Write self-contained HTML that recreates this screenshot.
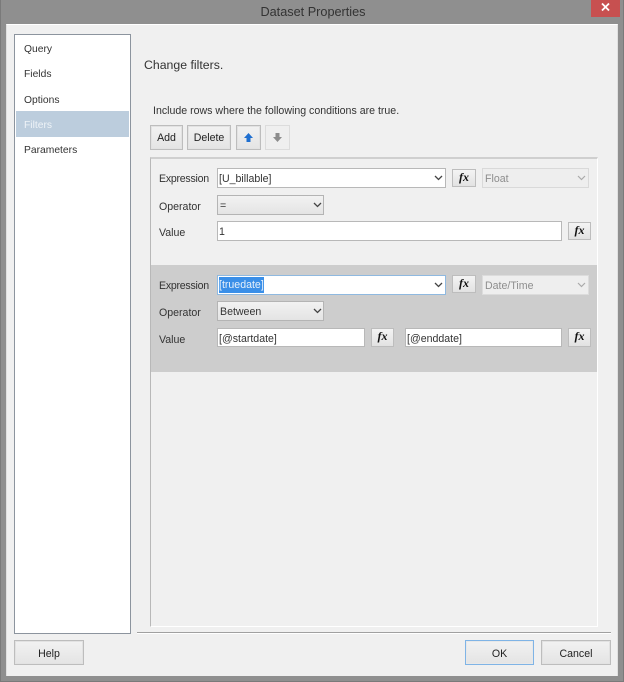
<!DOCTYPE html>
<html><head><meta charset="utf-8"><style>
*{box-sizing:border-box}
html,body{margin:0;padding:0}
body{width:624px;height:682px;background:#8f8f8f;position:relative;overflow:hidden;font-family:"Liberation Sans",sans-serif;font-size:10.6px;color:#222}
.a{position:absolute}
.t{position:absolute;white-space:nowrap;line-height:14px}
.btn{position:absolute;background:linear-gradient(#f2f2f2,#e4e4e4);border:1px solid #bdbdbd;box-shadow:inset 0 0 0 1px #e2e2e2;text-align:center;color:#222}
.inp{position:absolute;background:#fff;border:1px solid #b8b8b8;line-height:20px;padding-left:1px;white-space:nowrap;color:#333}
.sel{position:absolute;background:linear-gradient(#f2f2f2,#e4e4e4);border:1px solid #b4b4b4;line-height:20px;padding-left:2px;color:#333}
.fx{position:absolute;background:linear-gradient(#f4f4f4,#e2e2e2);border:1px solid #bdbdbd;text-align:center;font:italic bold 12px/15px "Liberation Serif",serif;color:#111}
.ch{position:absolute;width:9px;height:6px}
</style></head><body>
<div class="a" style="left:0;top:0;width:1px;height:682px;background:#7a7a7a"></div>
<div class="a" style="left:623px;top:0;width:1px;height:682px;background:#7a7a7a"></div>
<div class="a" style="left:0;top:681px;width:624px;height:1px;background:#7a7a7a"></div>
<div class="t" style="left:1px;top:4px;width:624px;text-align:center;font-size:12.7px;line-height:17px;color:#333">Dataset Properties</div>
<div class="a" style="left:591px;top:0;width:29px;height:17px;background:#c75050"></div>
<svg class="a" style="left:600px;top:2px" width="11" height="10"><path d="M2 1.5 L9 8.5 M9 1.5 L2 8.5" stroke="#fff" stroke-width="1.8"/></svg>
<div class="a" style="left:6px;top:24px;width:612px;height:652px;background:#f0f0f0;border-top:1px solid #fff;border-left:1px solid #e0e0e0;border-right:1px solid #e0e0e0"></div>

<div class="a" style="left:14px;top:34px;width:117px;height:600px;background:#fff;border:1px solid #8c949e"></div>
<div class="t" style="left:24px;top:43px;color:#333;font-size:10.3px">Query</div>
<div class="t" style="left:24px;top:68px;color:#333;font-size:10.3px">Fields</div>
<div class="t" style="left:24px;top:94px;color:#333;font-size:10.3px">Options</div>
<div class="a" style="left:16px;top:111px;width:113px;height:26px;background:#bccddd"></div>
<div class="t" style="left:24px;top:119px;color:#eef3f7;font-size:10.3px">Filters</div>
<div class="t" style="left:24px;top:144px;color:#333;font-size:10.3px">Parameters</div>

<div class="t" style="left:144px;top:57px;font-size:12.3px;line-height:16px;color:#333">Change filters.</div>
<div class="t" style="left:153px;top:104px;color:#333">Include rows where the following conditions are true.</div>

<div class="btn" style="left:150px;top:125px;width:33px;height:25px;line-height:25px">Add</div>
<div class="btn" style="left:187px;top:125px;width:44px;height:25px;line-height:25px">Delete</div>
<div class="btn" style="left:236px;top:125px;width:25px;height:25px"></div>
<svg class="a" style="left:243px;top:132px" width="11" height="11"><path d="M5.5 1 L10 6 H7.5 V10 H3.5 V6 H1 Z" fill="#1f6fd0"/></svg>
<div class="a" style="left:265px;top:125px;width:25px;height:25px;background:#efefef;border:1px solid #dcdcdc"></div>
<svg class="a" style="left:272px;top:132px" width="11" height="11"><path d="M5.5 10 L10 5 H7.5 V1 H3.5 V5 H1 Z" fill="#8c8c8c"/></svg>

<div class="a" style="left:150px;top:157px;width:448px;height:470px;background:#f0f0f0;border-top:2px solid #cfcfcf;border-left:1px solid #b8b8b8;border-right:1px solid #fff;border-bottom:1px solid #fff"></div>
<div class="a" style="left:151px;top:265px;width:446px;height:107px;background:#cdcdcd"></div>

<div class="t" style="left:159px;top:172px;color:#333;letter-spacing:-.25px">Expression</div>
<div class="inp" style="left:217px;top:168px;width:229px;height:20px">[U_billable]</div>
<svg class="ch" style="left:434px;top:175px"><path d="M1 1 L4.5 4.5 L8 1" fill="none" stroke="#444" stroke-width="1.3"/></svg>
<div class="fx" style="left:452px;top:169px;width:24px;height:18px">fx</div>
<div class="a" style="left:482px;top:168px;width:107px;height:20px;border:1px solid #d9d9d9;background:#eeeeee;color:#8d8d8d;line-height:20px;padding-left:2px">Float</div>
<svg class="ch" style="left:577px;top:175px"><path d="M1 1 L4.5 4.5 L8 1" fill="none" stroke="#aaa" stroke-width="1.2"/></svg>
<div class="t" style="left:159px;top:200px;color:#333">Operator</div>
<div class="sel" style="left:217px;top:195px;width:107px;height:20px">=</div>
<svg class="ch" style="left:313px;top:202px"><path d="M1 1 L4.5 4.5 L8 1" fill="none" stroke="#444" stroke-width="1.3"/></svg>
<div class="t" style="left:159px;top:226px;color:#333">Value</div>
<div class="inp" style="left:217px;top:221px;width:345px;height:20px">1</div>
<div class="fx" style="left:568px;top:222px;width:23px;height:18px">fx</div>

<div class="t" style="left:159px;top:279px;color:#333;letter-spacing:-.25px">Expression</div>
<div class="inp" style="left:217px;top:275px;width:229px;height:20px;border-color:#8fb9e0"><span style="display:inline-block;height:16px;line-height:17px;vertical-align:top;margin-top:1px;background:#3a8fe8;color:#e6f0fa">[truedate]</span></div>
<svg class="ch" style="left:434px;top:282px"><path d="M1 1 L4.5 4.5 L8 1" fill="none" stroke="#444" stroke-width="1.3"/></svg>
<div class="fx" style="left:452px;top:275px;width:24px;height:18px">fx</div>
<div class="a" style="left:482px;top:275px;width:107px;height:20px;border:1px solid #dcdcdc;background:#eeeeee;color:#8d8d8d;line-height:20px;padding-left:2px">Date/Time</div>
<svg class="ch" style="left:577px;top:282px"><path d="M1 1 L4.5 4.5 L8 1" fill="none" stroke="#aaa" stroke-width="1.2"/></svg>
<div class="t" style="left:159px;top:306px;color:#333">Operator</div>
<div class="sel" style="left:217px;top:301px;width:107px;height:20px">Between</div>
<svg class="ch" style="left:313px;top:308px"><path d="M1 1 L4.5 4.5 L8 1" fill="none" stroke="#444" stroke-width="1.3"/></svg>
<div class="t" style="left:159px;top:333px;color:#333">Value</div>
<div class="inp" style="left:217px;top:328px;width:148px;height:19px">[@startdate]</div>
<div class="fx" style="left:371px;top:328px;width:23px;height:19px">fx</div>
<div class="inp" style="left:405px;top:328px;width:157px;height:19px">[@enddate]</div>
<div class="fx" style="left:568px;top:328px;width:23px;height:19px">fx</div>

<div class="a" style="left:137px;top:632px;width:474px;height:1px;background:#a0a0a0"></div>
<div class="a" style="left:137px;top:633px;width:474px;height:1px;background:#fff"></div>
<div class="btn" style="left:14px;top:640px;width:70px;height:25px;line-height:26px">Help</div>
<div class="btn" style="left:465px;top:640px;width:69px;height:25px;line-height:26px;border-color:#7fb4e6;box-shadow:inset 0 0 0 1px #e8e8e8">OK</div>
<div class="btn" style="left:541px;top:640px;width:70px;height:25px;line-height:26px">Cancel</div>
</body></html>
